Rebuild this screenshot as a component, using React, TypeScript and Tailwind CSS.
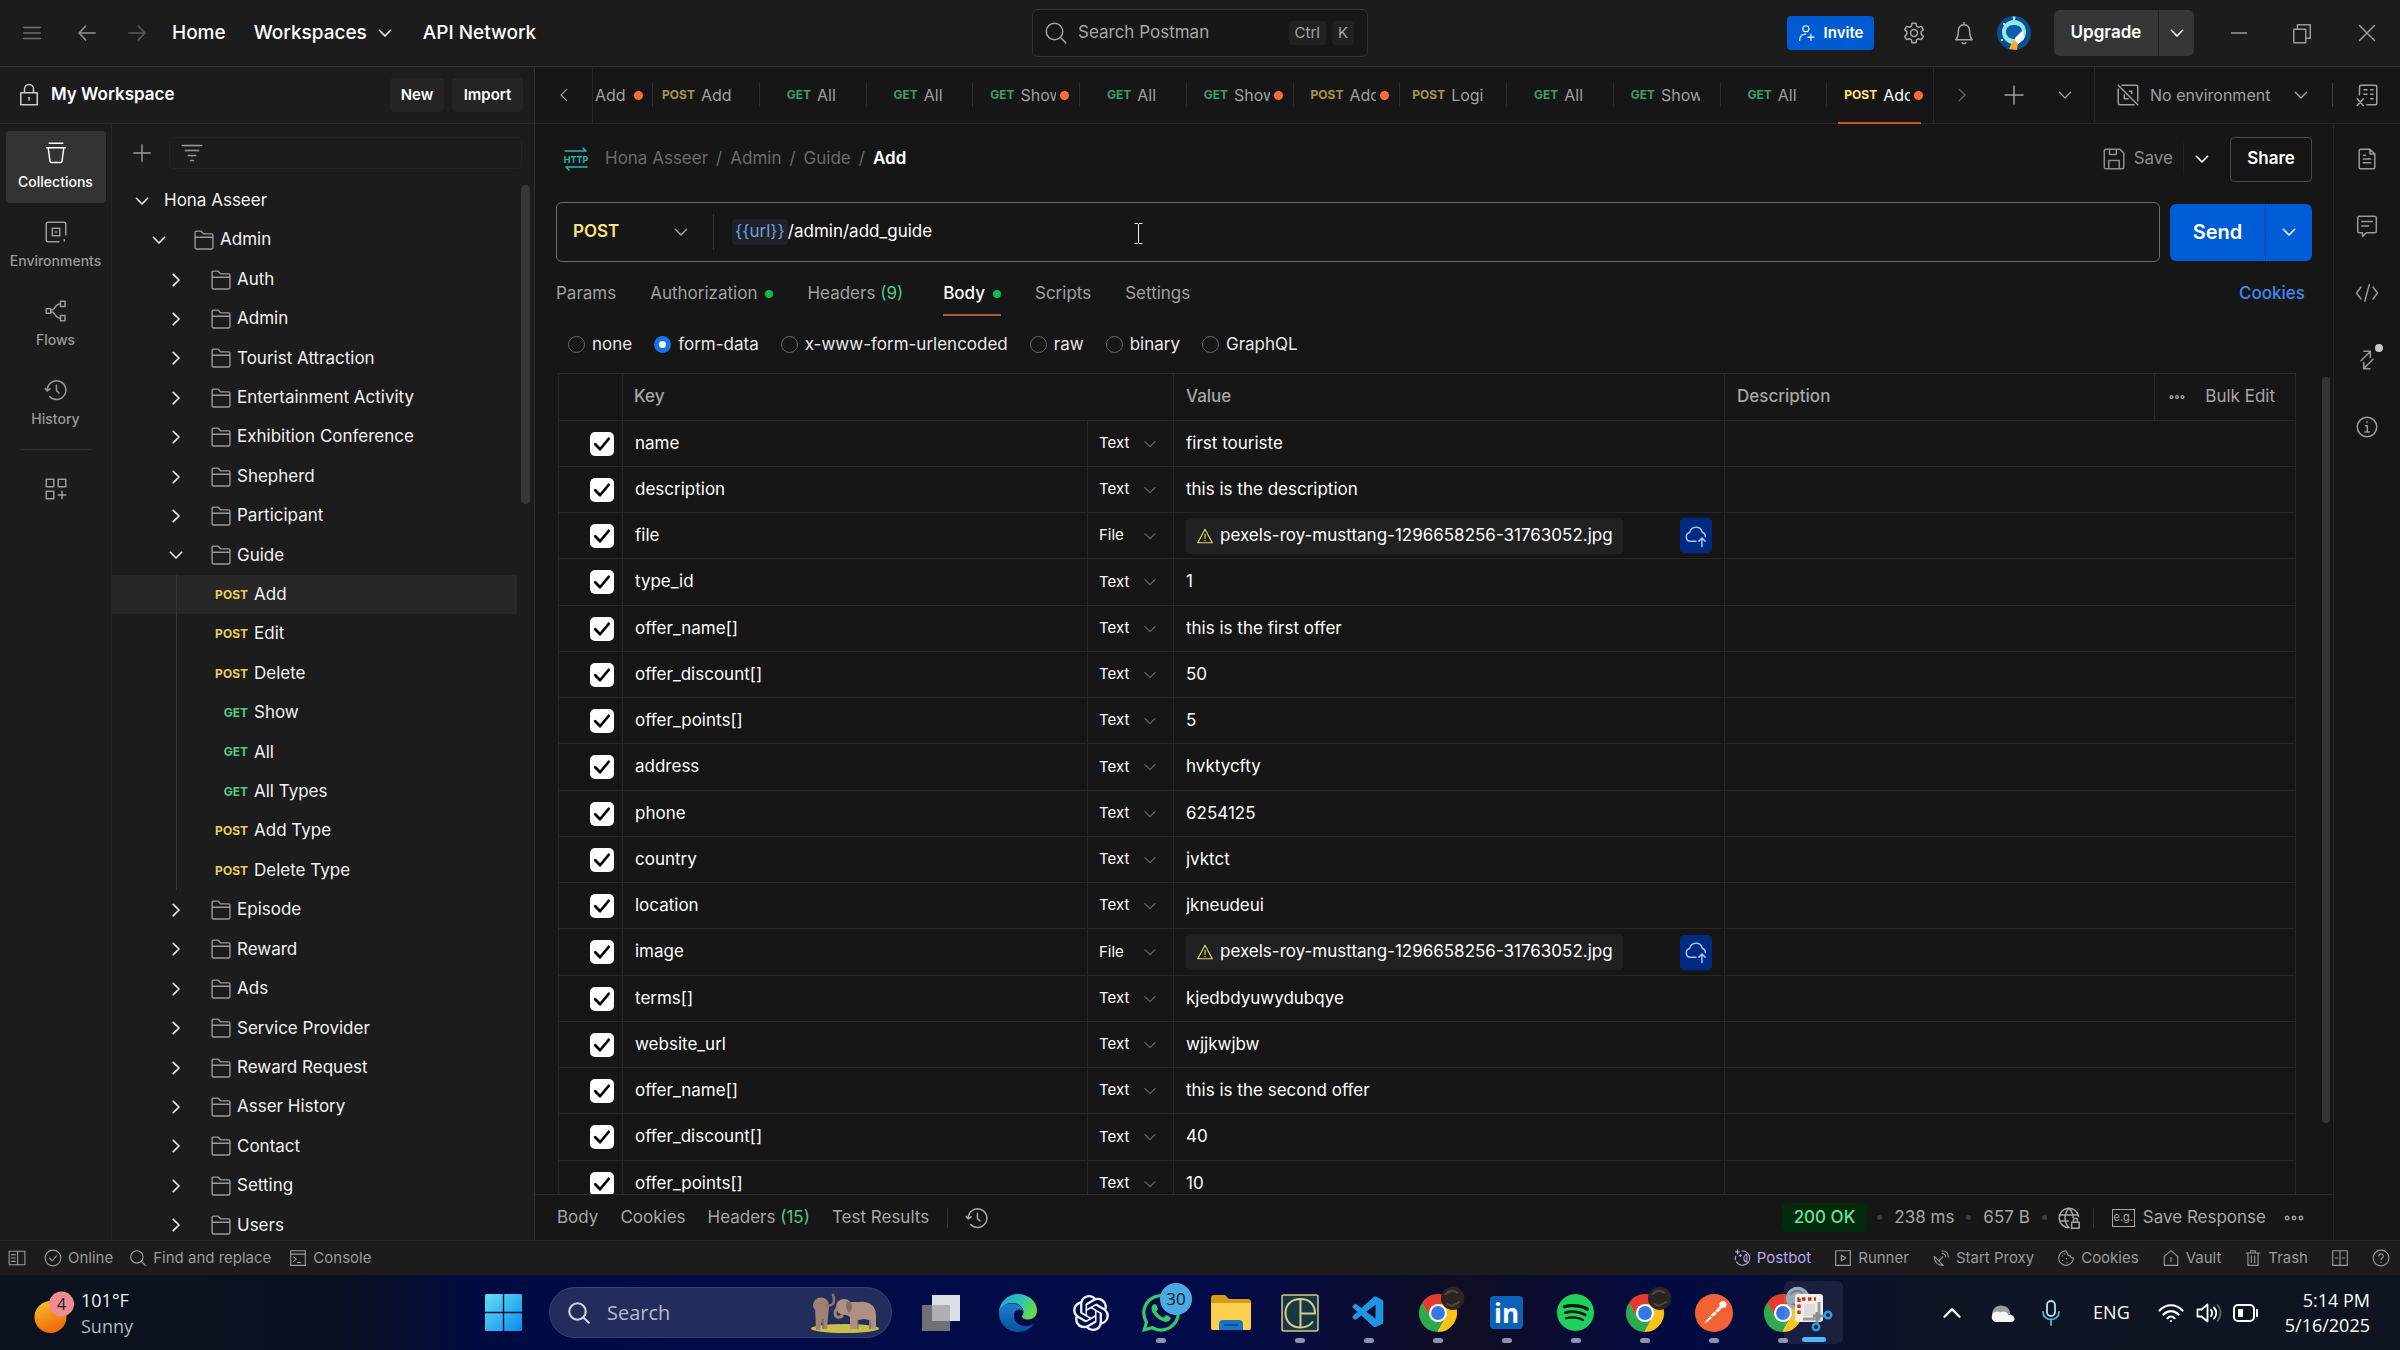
import React from "react";
import { SiOpenai, SiSpotify, SiWhatsapp } from "react-icons/si";
import { VscVscode } from "react-icons/vsc";

type IconProps = { d: string; className?: string; w?: number; children?: React.ReactNode };

function Ic({ d, className = "size-6", w = 1, children }: IconProps) {
  return (
    <svg viewBox="0 0 16 16" fill="none" stroke="currentColor" strokeWidth={w} strokeLinecap="round" strokeLinejoin="round" className={`shrink-0 ${className}`} aria-hidden="true">
      <path d={d} />
      {children}
    </svg>
  );
}

const P = {
  menu: "M2 4h12M2 8h12M2 12h12",
  back: "M14 8H2.5M7 3L2.2 8L7 13",
  fwd: "M2 8h11.5M9 3l4.8 5L9 13",
  down: "M3.5 5.8L8 10.4l4.500-4.600",
  right: "M5.800 3.500L10.400 8l-4.600 4.500",
  left: "M10.200 3.500L5.600 8l4.600 4.500",
  plus: "M8 2v12M2 8h12",
  search: "M7 1.500a5.500 5.500 0 1 1 0 11a5.500 5.500 0 1 1 0-11M11 11l3.500 3.500",
  lock: "M2.500 6.500h11v8h-11zM5 6.500V4a3 3 0 0 1 6 0v2.500M8 9.700v1.600",
  filter: "M1.500 3h13M3.500 6.300h9M5.500 9.700h5M7 13h2",
  collections: "M3.500 1.500h9M1.800 4.500h12.400M2.800 4.500l1.200 9a1 1 0 0 0 1 .9h6a1 1 0 0 0 1-.9l1.200-9",
  env: "M10 14.500H2.500a1 1 0 0 1-1-1v-11a1 1 0 0 1 1-1h11a1 1 0 0 1 1 1V10M5.500 5.500h5v5h-5zM7.500 8h1M13.500 13v1",
  flows: "M1.500 6.500h3v3h-3zM11 1.500h3v3.500h-3zM11 11h3v3.500h-3zM4.500 7.500C8 7.500 7 3.200 11 3.200M4.500 8.500C8 8.500 7 12.800 11 12.800",
  history: "M2.200 8a6.200 6.200 0 1 1 1.600 4.300M.8 7l1.400 1.600L4 7.200M8.300 4.800v3.600l1.700 1.500",
  apps: "M1.500 1.500h5v5h-5zM9.500 1.500h5v5h-5zM1.500 9.500h5v5h-5zM12 9.500v5M9.500 12h5",
  folder: "M1.500 13.500v-11a1 1 0 0 1 1-1h3.200l2 2h5.800a1 1 0 0 1 1 1v9a1 1 0 0 1-1 1h-11a1 1 0 0 1-1-1zM1.500 6h13",
  gear: "M6.700 1.500h2.600l.4 1.900 1.300.8 1.900-.6 1.300 2.200-1.400 1.400v1.600l1.400 1.400-1.300 2.200-1.900-.6-1.300.8-.4 1.900H6.700l-.4-1.900-1.300-.8-1.900.6-1.300-2.200 1.400-1.400V7.200L1.800 5.800l1.300-2.200 1.900.6 1.300-.8zM8 5.700a2.300 2.300 0 1 1 0 4.600a2.300 2.300 0 1 1 0-4.600",
  bell: "M2.500 12.500h11c-1.500-1.500-1.700-3-1.700-5.500C11.800 4 10.300 2.500 8 2.500S4.200 4 4.200 7c0 2.500-.2 4-1.700 5.500M8 1v1.500M6.700 14.500c.6.700 2 .7 2.600 0",
  min: "M3 8h10",
  restore: "M2.500 5.500h8v9h-8zM5 5.500v-3h8.500v9h-3",
  close: "M3 3l10 10M13 3L3 13",
  noEnv: "M4 1.500h9.500a1 1 0 0 1 1 1V12M12 14.500H2.500a1 1 0 0 1-1-1V4M1.500 1.500l13 13M9 5.500h1.500V7M5.500 8v2.500H8",
  envVars: "M3 8V2.500a1 1 0 0 1 1-1h9.500a1 1 0 0 1 1 1v11a1 1 0 0 1-1 1H8M6 4.500h2M10.500 4.500H12M6 7.500h2M10.500 7.500H12M10.500 10.500H12M1.500 10.500l4 4.500M5.500 10.500l-4 4.500",
  save: "M1.500 2.500a1 1 0 0 1 1-1h9.500l2.500 2.500v9.500a1 1 0 0 1-1 1h-11a1 1 0 0 1-1-1zM5 1.500v3.500h4.500V1.500M4.500 14.500V9h7v5.500",
  doc: "M2.800 2.500a1 1 0 0 1 1-1H10l3.200 3.200v8.800a1 1 0 0 1-1 1H3.800a1 1 0 0 1-1-1zM10 1.500v3.200h3.200M5.500 5.500h1.500M5.500 8h5M5.500 10.500h5",
  comment: "M1.800 2.500a1 1 0 0 1 1-1h10.400a1 1 0 0 1 1 1v9a1 1 0 0 1-1 1H7.500L5 15v-2.500H2.800a1 1 0 0 1-1-1zM4.500 5h7M4.500 8h4.500",
  code: "M4 4L1 8l3 4M12 4l3 4-3 4M9.500 2.500l-3 11",
  info: "M8 1.500a6.500 6.500 0 1 1 0 13a6.500 6.500 0 1 1 0-13M7 7.200h1.200v4M6.600 11.300h3M8 4.600v.4",
  swap: "M4 8.500L10 2.500M6 2.200h4.200v4.200M12 7.500l-6 6M10 13.800H5.800V9.600",
  warn: "M8 2L14.500 14h-13zM8 6.500v3.500M8 12v.2",
  cloud: "M8 11.500H4.200a3 3 0 0 1-.4-5.900A4.300 4.300 0 0 1 12.200 5.500a3 3 0 0 1 2 2.800M12 15V9.500M9.900 11.400L12 9.300l2.100 2.100",
  user: "M7 1.500a2.700 2.700 0 1 1 0 5.400a2.700 2.700 0 1 1 0-5.400M1.500 14.500c0-3.500 2-5.500 5.300-5.500M11.500 9v5.500M8.800 11.700h5.500",
  panel: "M1 2h14v12H1zM8.500 2v12M3 5h3.500M3 8h3.500M3 11h3.500",
  online: "M8 1a7 7 0 1 1 0 14a7 7 0 1 1 0-14M5 8l2.300 2.500L11.200 6",
  console: "M1.500 1.500h13v13h-13zM1.500 4.500h13M4 7l2.500 2L4 11M7.500 12h3",
  runner: "M1.500 1.500h13v13h-13zM6.500 5.500v5L10.500 8z",
  postbot: "M8 1.800A6.300 6.300 0 1 1 3.200 11.500M2.500 6.500c-.6 1-.7 2-.5 3M11.500 5c-2.500 1.500-2.500 5 0 6.500M12.300 5v6.500M4 .8v3.400M2.300 2.500h3.400M6.500 5v1.600M5.700 5.800h1.600",
  proxy: "M2 6.500c0 5 3 8 8 8zM6 10.500L9.500 7M9 4c1.800 0 3 1.200 3 3M9 1.500c3.200 0 5.500 2.300 5.500 5.500",
  cookie: "M8 1.500a6.500 6.500 0 1 0 6.500 6.500c-1.500.3-2.500-.8-2.500-2-2 .3-3-1-2.500-2.500C8.500 3.300 8 2.500 8 1.500M5 6v.2M5 10v.2M8.500 8.500v.2M9 12v.2M6.800 4.300v.2",
  vault: "M2 6.500L8 1.500l6 5v8H2zM8 7.500v3.500",
  trash: "M2 3.500h12M6 3.500v-2h4v2M3.500 3.500v11h9v-11M6.500 6v6M9.500 6v6",
  twoPane: "M1.500 1.500h13v13h-13zM8 1.500v13M4 8h2M10 8h2",
  help: "M8 1a7 7 0 1 1 0 14a7 7 0 1 1 0-14M6 6.300a2 2 0 1 1 2.800 1.900c-.5.300-.8.600-.8 1.200M8 11.600v.2",
  globeLock: "M8 14.500A6.500 6.500 0 1 1 14.400 7M8 14.500C4.500 11 4.500 5 8 1.500c1.800 1.800 2.600 4 2.700 6M1.700 6h12.500M1.700 10H7.500M9.800 10.800h5v4h-5zM11 10.800V9.500a1.300 1.300 0 0 1 2.600 0v1.300",
  more: "M2.500 6.600a1.400 1.400 0 1 1 0 2.800a1.400 1.400 0 1 1 0-2.800M8 6.600a1.400 1.400 0 1 1 0 2.800a1.400 1.400 0 1 1 0-2.800M13.500 6.600a1.400 1.400 0 1 1 0 2.800a1.400 1.400 0 1 1 0-2.800",
};

const VLine = ({ className = "h-6 bg-[#333]" }: { className?: string }) => <span className={`w-px shrink-0 ${className}`} />;

/* ---------- Title bar ---------- */
function TitleBar() {
  return (
    <header className="relative flex h-[67px] shrink-0 items-center border-b border-[#303030] bg-[#1c1c1c] text-[19px] font-medium text-white">
      <button aria-label="Menu" className="ml-[21px] text-[#6f6f6f]"><Ic d={P.menu} className="size-[22px]" /></button>
      <button aria-label="Back" className="ml-[33px] text-[#8f8f8f]"><Ic d={P.back} className="size-[22px]" w={1.1} /></button>
      <button aria-label="Forward" className="ml-7 text-[#5a5a5a]"><Ic d={P.fwd} className="size-[22px]" w={1.1} /></button>
      <nav className="ml-6 flex items-center">
        <a href="#home">Home</a>
        <button className="ml-7 flex items-center gap-2 font-medium">Workspaces <Ic d={P.down} className="size-5" w={1.2} /></button>
        <a href="#network" className="ml-7">API Network</a>
      </nav>
      <label className="absolute left-1/2 top-[9px] flex h-[48px] w-[336px] -translate-x-1/2 items-center rounded-md border border-[#333] bg-[#171717] pl-[11px] pr-[13px] text-[17px] font-normal text-[#a6a6a6]">
        <Ic d={P.search} className="size-6" />
        <input aria-label="Search Postman" placeholder="Search Postman" className="ml-2.5 w-0 flex-1 bg-transparent outline-none placeholder:text-[#a6a6a6]" />
        <span className="rounded bg-[#212121] px-1.5 text-[15px] leading-6">Ctrl</span>
        <span className="ml-1.5 rounded bg-[#212121] px-1.5 text-[15px] leading-6">K</span>
      </label>
      <div className="ml-auto flex items-center">
        <button className="flex h-[34px] w-[87px] items-center justify-center gap-2 rounded bg-[#005bd3] text-[15px] font-semibold"><Ic d={P.user} className="size-[18px]" />Invite</button>
        <button aria-label="Settings" className="ml-7 text-[#a6a6a6]"><Ic d={P.gear} className="size-6" /></button>
        <button aria-label="Notifications" className="ml-[26px] text-[#a6a6a6]"><Ic d={P.bell} className="size-6" /></button>
        <button aria-label="Account" className="ml-[21px]">
          <svg viewBox="0 0 34 34" className="size-[34px]">
            <circle cx="17" cy="17" r="17" fill="#0b4f93" />
            <path d="M17 2v5" stroke="#9ff0e8" strokeWidth="2" />
            <circle cx="17" cy="1.800" r="1.500" fill="#9ff0e8" />
            <circle cx="17" cy="16" r="12" fill="#8fe9e4" />
            <path d="M9 15.500c0-4.500 4-6.500 8-6.500s8 2 8 6.500-3.500 7.500-8 7.500-8-3-8-7.500" fill="#0d5fae" />
            <path d="M26 14l-8 8 2 7 7-6z" fill="#fff" />
            <path d="M12 33l4-9 5 3-1 7z" fill="#ffab2e" />
            <circle cx="5" cy="24" r="1" fill="#fff" /><circle cx="7" cy="8" r="1" fill="#fff" />
          </svg>
        </button>
        <div className="ml-[23px] flex h-[46px] items-stretch rounded-md bg-[#363636] text-[17px] font-semibold">
          <button className="w-[104px]">Upgrade</button>
          <button aria-label="Upgrade options" className="flex w-9 items-center justify-center border-l border-[#232323]"><Ic d={P.down} className="size-5" w={1.2} /></button>
        </div>
        <button aria-label="Minimize" className="ml-[33px] text-[#9a9a9a]"><Ic d={P.min} className="size-6" /></button>
        <button aria-label="Restore" className="ml-[39px] text-[#9a9a9a]"><Ic d={P.restore} className="size-6" /></button>
        <button aria-label="Close" className="ml-[41px] mr-[21px] text-[#9a9a9a]"><Ic d={P.close} className="size-6" /></button>
      </div>
    </header>
  );
}

/* ---------- Sidebar ---------- */
const rail = [
  { label: "Collections", d: P.collections, on: true },
  { label: "Environments", d: P.env },
  { label: "Flows", d: P.flows },
  { label: "History", d: P.history },
];

type Node = { t: string; lvl?: 0 | 1; m?: "POST" | "GET"; open?: boolean; sel?: boolean };
const tree: Node[] = [
  { t: "Hona Asseer", lvl: 0, open: true },
  { t: "Admin", lvl: 1, open: true },
  { t: "Auth" }, { t: "Admin" }, { t: "Tourist Attraction" }, { t: "Entertainment Activity" },
  { t: "Exhibition Conference" }, { t: "Shepherd" }, { t: "Participant" }, { t: "Guide", open: true },
  { t: "Add", m: "POST", sel: true }, { t: "Edit", m: "POST" }, { t: "Delete", m: "POST" },
  { t: "Show", m: "GET" }, { t: "All", m: "GET" }, { t: "All Types", m: "GET" },
  { t: "Add Type", m: "POST" }, { t: "Delete Type", m: "POST" },
  { t: "Episode" }, { t: "Reward" }, { t: "Ads" }, { t: "Service Provider" }, { t: "Reward Request" },
  { t: "Asser History" }, { t: "Contact" }, { t: "Setting" }, { t: "Users" },
];

function TreeRow({ n }: { n: Node }) {
  if (n.m)
    return (
      <button className={`mr-[17px] flex items-center text-left ${n.sel ? "bg-[#272727]" : ""}`}>
        <span className="ml-16 w-px self-stretch bg-[#363636]" />
        <span className={`w-[71px] text-right text-[12px] font-bold ${n.m === "POST" ? "text-[#e8cf5e]" : "text-[#54c98a]"}`}>{n.m}</span>
        <span className="ml-1.5">{n.t}</span>
      </button>
    );
  const pad = n.lvl === 0 ? "pl-5" : n.lvl === 1 ? "pl-[37px]" : "pl-[54px]";
  return (
    <button className={`flex items-center text-left ${pad}`}>
      <Ic d={n.open ? P.down : P.right} className="size-5" w={1.3} />
      {n.lvl === 0 ? null : <Ic d={P.folder} className="ml-6 size-[22px] text-[#9a9a9a]" />}
      <span className={n.lvl === 0 ? "ml-3" : "ml-[5px]"}>{n.t}</span>
    </button>
  );
}

function Sidebar() {
  return (
    <aside className="flex w-[535px] shrink-0 flex-col border-r border-[#303030] bg-[#1c1c1c] text-[17px] text-[#f2f2f2]">
      <div className="flex h-[57px] shrink-0 items-center border-b border-[#282828] pl-[17px] pr-[11px] text-white">
        <Ic d={P.lock} className="size-6 text-[#ccc]" />
        <span className="ml-2.5 font-semibold">My Workspace</span>
        <button className="ml-auto h-[34px] w-[54px] rounded bg-[#242424] text-[15px] font-semibold">New</button>
        <button className="ml-2 h-[34px] w-[71px] rounded bg-[#242424] text-[15px] font-semibold">Import</button>
      </div>
      <div className="flex min-h-0 flex-1">
        <nav className="flex w-[112px] shrink-0 flex-col items-center gap-[7px] border-r border-[#262626] pt-[7px] text-[14px] font-medium text-[#9a9a9a]">
          {rail.map((r) => (
            <button key={r.label} className={`flex h-[72px] w-[100px] flex-col items-center gap-1.5 rounded pt-2.5 ${r.on ? "bg-[#333] text-white" : ""}`}>
              <Ic d={r.d} className="size-6" />
              {r.label}
            </button>
          ))}
          <span className="mt-0.5 h-px w-[72px] bg-[#2b2b2b]" />
          <button aria-label="Configure sidebar" className="mt-5"><Ic d={P.apps} className="size-6" /></button>
        </nav>
        <div className="flex min-w-0 flex-1 flex-col">
          <div className="flex h-[57px] shrink-0 items-center pl-[19px] pr-3 text-[#9a9a9a]">
            <button aria-label="Create new"><Ic d={P.plus} className="size-[22px]" /></button>
            <label className="ml-4 flex h-8 flex-1 items-center rounded border border-[#232323] pl-2.5">
              <Ic d={P.filter} className="size-6" />
              <input aria-label="Filter collections" className="ml-2 w-0 flex-1 bg-transparent outline-none" />
            </label>
          </div>
          <div className="relative min-h-0 flex-1 overflow-hidden">
            <div className="grid h-[1064px] auto-rows-fr">
              {tree.map((n, i) => <TreeRow key={i} n={n} />)}
            </div>
            <span className="absolute right-1 top-1 h-[319px] w-[9px] rounded-full bg-[#373737]" />
          </div>
        </div>
      </div>
    </aside>
  );
}

/* ---------- Request tabs ---------- */
type Tab = { m: "POST" | "GET"; t: string; dot?: boolean; pad: string; on?: boolean };
const tabs: Tab[] = [
  { m: "POST", t: "Add", pad: "pl-2.5" },
  { m: "GET", t: "All", pad: "pl-7" },
  { m: "GET", t: "All", pad: "pl-7" },
  { m: "GET", t: "Show", dot: true, pad: "pl-[18px]" },
  { m: "GET", t: "All", pad: "pl-7" },
  { m: "GET", t: "Show", dot: true, pad: "pl-[18px]" },
  { m: "POST", t: "Add", dot: true, pad: "pl-[18px]" },
  { m: "POST", t: "Logi", pad: "pl-[13px]" },
  { m: "GET", t: "All", pad: "pl-7" },
  { m: "GET", t: "Show", pad: "pl-[18px]" },
  { m: "GET", t: "All", pad: "pl-7" },
  { m: "POST", t: "Add", dot: true, pad: "pl-[18px]", on: true },
];
const Dot = () => <span className="size-[9px] shrink-0 rounded-full bg-[#ff6c37]" />;

function TabStrip() {
  return (
    <div className="flex h-[57px] shrink-0 items-stretch border-b border-[#262626] text-[16px] text-[#a0a0a0]">
      <button aria-label="Scroll tabs left" className="flex w-[58px] items-center justify-center border-r border-[#262626]"><Ic d={P.left} className="size-5" /></button>
      <button className="flex w-[59px] items-center gap-2 pl-0.5">Add <Dot /></button>
      <div className="grid min-w-0 flex-1 grid-cols-12">
        {tabs.map((t, i) => (
          <button key={i} className={`relative flex min-w-0 items-center ${t.pad} ${t.dot ? "pr-2.5" : "pr-5"}`}>
            <span className="absolute left-0 top-4 h-6 w-px bg-[#2b2b2b]" />
            <span className={`mr-1.5 text-[12px] font-bold ${t.m === "GET" ? "text-[#439a6c]" : t.on ? "text-[#ffe47e]" : "text-[#a6974e]"}`}>{t.m}</span>
            <span className={`min-w-0 flex-1 overflow-hidden whitespace-nowrap text-left ${t.on ? "text-white" : ""}`}>{t.t}</span>
            {t.dot ? <span className="ml-1 flex"><Dot /></span> : null}
            {t.on ? <span className="absolute -bottom-px left-3 right-3 h-0.5 bg-[#c8532d]" /> : null}
          </button>
        ))}
      </div>
      <div className="flex w-[162px] items-center justify-between border-x border-[#262626] pl-[18px] pr-[19px]">
        <button aria-label="Scroll tabs right" className="text-[#6b6b6b]"><Ic d={P.right} className="size-5" /></button>
        <button aria-label="New tab"><Ic d={P.plus} className="size-6" /></button>
        <button aria-label="Tab list"><Ic d={P.down} className="size-5" /></button>
      </div>
      <button className="flex w-[238px] items-center pl-[21px]">
        <Ic d={P.noEnv} className="size-6" />
        <span className="ml-2.5 flex-1 text-left">No environment</span>
        <Ic d={P.down} className="mr-[21px] size-5" w={1.1} />
        <VLine className="h-6 bg-[#444]" />
      </button>
      <button aria-label="Environment quick look" className="flex w-[67px] items-center justify-center"><Ic d={P.envVars} className="size-6" /></button>
    </div>
  );
}

/* ---------- Request ---------- */
function RequestHead() {
  const crumb = "text-[#6b6b6b]";
  return (
    <div className="flex h-[70px] shrink-0 items-center pr-[21px]">
      <svg viewBox="0 0 24 24" className="ml-2 size-6" fill="none" stroke="#2bb8b0" strokeWidth="1.5" strokeLinecap="round" strokeLinejoin="round" aria-hidden="true">
        <path d="M1 4h21M19 1l3 3M23 20H2M5 23l-3-3" />
        <text x="12" y="16" textAnchor="middle" fontSize="9" fontWeight="700" fontFamily="Inter" fill="#2bb8b0" stroke="none">HTTP</text>
      </svg>
      <nav className="ml-[17px] flex items-center gap-2 text-[17px]">
        <a href="#c" className={crumb}>Hona Asseer</a><span className={crumb}>/</span>
        <a href="#a" className={crumb}>Admin</a><span className={crumb}>/</span>
        <a href="#g" className={crumb}>Guide</a><span className={crumb}>/</span>
        <span className="font-semibold text-white">Add</span>
      </nav>
      <button className="ml-auto flex items-center gap-2 text-[17px] text-[#8c8c8c]"><Ic d={P.save} className="size-6" />Save</button>
      <VLine className="ml-2.5 h-8 bg-[#222]" />
      <button aria-label="Save options" className="ml-2 text-white"><Ic d={P.down} className="size-5" w={1.3} /></button>
      <button className="ml-[18px] h-[45px] w-[82px] rounded border border-[#4a4a4a] text-[17px] font-semibold text-white">Share</button>
    </div>
  );
}

function UrlBar() {
  return (
    <div className="mt-2 flex h-[60px] shrink-0 items-center pr-[21px] text-[17px]">
      <div className="relative flex h-full flex-1 items-center rounded-md border border-[#6b6b6b] text-white">
        <label className="relative flex items-center">
          <select aria-label="Method" className="w-[140px] appearance-none bg-transparent pl-4 font-semibold text-[#ffe47e] outline-none"><option>POST</option></select>
          <Ic d={P.down} className="pointer-events-none absolute right-1.5 size-5 text-[#a6a6a6]" w={1.1} />
        </label>
        <VLine className="ml-4 h-9 bg-[#333]" />
        <span className="ml-[18px] rounded bg-[#1f2227] px-[3px] text-[#6f9fe0]">{"{{url}}"}</span>
        <input aria-label="Request URL" defaultValue="/admin/add_guide" className="min-w-0 flex-1 bg-transparent outline-none" />
        <svg viewBox="0 0 9 21" className="absolute left-[577px] top-5 h-[21px] w-[9px]" stroke="#eee" fill="none" aria-hidden="true"><path d="M.5 .5h3l1 1 1-1h3M4.500 1v19M.5 20.500h3l1-1 1 1h3" /></svg>
      </div>
      <div className="ml-2.5 flex h-[57px] items-stretch rounded-md bg-[#005bd7] text-white">
        <button className="w-[95px] text-[20px] font-semibold">Send</button>
        <button aria-label="Send options" className="flex w-[47px] items-center justify-center border-l border-[#0a47a0]"><Ic d={P.down} className="size-5" w={1.3} /></button>
      </div>
    </div>
  );
}

const G = () => <span className="size-2 rounded-full bg-[#0cbb52]" />;

function BodyTabs() {
  return (
    <div className="flex h-[54px] shrink-0 items-stretch pr-7 pt-2.5 text-[17px] text-[#a0a0a0]">
      <button>Params</button>
      <button className="ml-[34px] flex items-center gap-2">Authorization <G /></button>
      <button className="ml-[34px]">Headers <span className="text-[#55c58b]">(9)</span></button>
      <button className="ml-10 flex items-center gap-2 border-b-2 border-[#a85a40] pt-0.5 font-medium text-white">Body <G /></button>
      <button className="ml-[34px]">Scripts</button>
      <button className="ml-[34px]">Settings</button>
      <a href="#cookies" className="ml-auto self-center font-medium text-[#3f88f5]">Cookies</a>
    </div>
  );
}

const modes = ["none", "form-data", "x-www-form-urlencoded", "raw", "binary", "GraphQL"];
function Modes() {
  return (
    <div role="radiogroup" aria-label="Body type" className="flex h-[57px] shrink-0 items-center gap-[22px] pl-3 text-[17px] text-[#e8e8e8]">
      {modes.map((m) => (
        <label key={m} className="flex items-center gap-[7px]">
          <input type="radio" name="body-mode" defaultChecked={m === "form-data"} className="size-[17px] appearance-none rounded-full border border-[#666] checked:border-[5px] checked:border-[#1574e8] checked:bg-white" />
          {m}
        </label>
      ))}
    </div>
  );
}

const pic = "pexels-roy-musttang-1296658256-31763052.jpg";
const rows: [string, string, boolean?][] = [
  ["name", "first touriste"], ["description", "this is the description"], ["file", pic, true], ["type_id", "1"],
  ["offer_name[]", "this is the first offer"], ["offer_discount[]", "50"], ["offer_points[]", "5"], ["address", "hvktycfty"],
  ["phone", "6254125"], ["country", "jvktct"], ["location", "jkneudeui"], ["image", pic, true], ["terms[]", "kjedbdyuwydubqye"],
  ["website_url", "wjjkwjbw"], ["offer_name[]", "this is the second offer"], ["offer_discount[]", "40"], ["offer_points[]", "10"],
];
const cell = "border border-[#272727] p-0";

function FormTable() {
  return (
    <div className="relative min-h-0 flex-1 overflow-hidden pl-0.5 pr-[37px]">
      <table className="w-full table-fixed border-collapse text-[17px] text-white">
        <colgroup>
          <col className="w-16" /><col className="w-[465px]" /><col className="w-[86px]" /><col /><col className="w-[430px]" /><col className="w-[141px]" />
        </colgroup>
        <thead>
          <tr className="h-[47px] text-left text-[#a6a6a6]">
            <th className={cell} aria-label="Enabled" />
            <th className={`${cell} pl-[11px] font-medium`} colSpan={2}>Key</th>
            <th className={`${cell} pl-3 font-medium`}>Value</th>
            <th className={`${cell} pl-3 font-medium`}>Description</th>
            <th className={cell}>
              <div className="flex items-center justify-between pl-3.5 pr-5">
                <button aria-label="Columns"><Ic d={P.more} className="size-4" w={1.3} /></button>
                <button className="font-normal">Bulk Edit</button>
              </div>
            </th>
          </tr>
        </thead>
        <tbody>
          {rows.map(([k, v, file], i) => (
            <tr key={i} className="h-[46px] nth-[4n]:h-[47px]">
              <td className={cell}>
                <label className="relative ml-[31px] block size-6">
                  <input type="checkbox" defaultChecked aria-label={`Include ${k}`} className="block size-6 appearance-none rounded-[5px] bg-white" />
                  <Ic d="M3.500 8.200L6.700 11.500L12.500 4.500" className="pointer-events-none absolute inset-0 size-6 text-black" w={1.8} />
                </label>
              </td>
              <td className={`${cell} pl-3`}><input aria-label="Key" defaultValue={k} className="block w-full bg-transparent outline-none" /></td>
              <td className={`${cell} pl-[11px]`}>
                <label className="relative flex items-center">
                  <select aria-label="Type" defaultValue={file ? "File" : "Text"} className="w-[70px] appearance-none bg-transparent text-[15px] outline-none"><option>Text</option><option>File</option></select>
                  <Ic d={P.down} className="pointer-events-none absolute right-3.5 size-[18px] text-[#6b6b6b]" />
                </label>
              </td>
              <td className={`${cell} pl-3`}>
                {file ? (
                  <div className="flex items-center justify-between pr-3">
                    <span className="flex h-9 items-center gap-1.5 rounded bg-[#212121] px-2.5"><Ic d={P.warn} className="size-[18px] text-[#dcd060]" w={1.1} />{v}</span>
                    <button aria-label="Upload to cloud" className="flex h-[35px] w-8 items-center justify-center rounded bg-[#012a80] text-[#9cc8ff]"><Ic d={P.cloud} className="size-6" /></button>
                  </div>
                ) : (
                  <input aria-label="Value" defaultValue={v} className="block w-full bg-transparent outline-none" />
                )}
              </td>
              <td className={cell} colSpan={2}><input aria-label="Description" className="block w-full bg-transparent px-3 outline-none" /></td>
            </tr>
          ))}
        </tbody>
      </table>
      <span className="absolute right-[3px] top-1 h-[746px] w-2 rounded-full bg-[#353535]" />
    </div>
  );
}

function ResponseBar() {
  const sep = <span className="size-[5px] rounded-full bg-[#3f3f3f]" />;
  return (
    <div className="flex h-[46px] shrink-0 items-center border-t border-[#2b2b2b] pl-[22px] pr-[29px] text-[17px] text-[#a6a6a6]">
      <button>Body</button>
      <button className="ml-[22px]">Cookies</button>
      <button className="ml-[22px]">Headers <span className="text-[#55c58b]">(15)</span></button>
      <button className="ml-[22px]">Test Results</button>
      <VLine className="ml-[18px] h-5 bg-[#333]" />
      <button aria-label="Response history" className="ml-[17px]"><Ic d={P.history} className="size-6" /></button>
      <span className="ml-auto rounded bg-[#03290c] px-3 font-medium leading-[29px] text-[#69e09c]">200 OK</span>
      <div className="ml-2.5 flex items-center gap-3">
        {sep}<span>238 ms</span>{sep}<span>657 B</span>{sep}
      </div>
      <Ic d={P.globeLock} className="ml-2.5 size-6" />
      <VLine className="ml-3 h-5 bg-[#333]" />
      <button className="ml-[18px] flex items-center gap-2">
        <span className="flex h-[18px] w-[23px] items-center justify-center border border-[#a6a6a6] text-[11px] leading-none">e.g.</span>
        Save Response
      </button>
      <button aria-label="More" className="ml-[18px]"><Ic d={P.more} className="size-5" w={1.1} /></button>
    </div>
  );
}

const rightRail = [P.doc, P.comment, P.code, P.swap, P.info];
const rightNames = ["Documentation", "Comments", "Code", "Related requests", "Info"];

function Item({ d, t, className = "" }: { d: string; t: string; className?: string }) {
  return <button className={`flex items-center gap-1.5 ${className}`}><Ic d={d} className="size-[18px]" />{t}</button>;
}

function StatusBar() {
  return (
    <footer className="flex h-[35px] shrink-0 items-center border-t border-[#282828] bg-[#1c1c1c] pl-2 pr-2.5 text-[15px] text-[#9a9a9a]">
      <button aria-label="Toggle sidebar"><Ic d={P.panel} className="size-[18px]" /></button>
      <Item d={P.online} t="Online" className="ml-[18px]" />
      <Item d={P.search} t="Find and replace" className="ml-4" />
      <Item d={P.console} t="Console" className="ml-[18px]" />
      <div className="ml-auto flex items-center gap-[23px]">
        <Item d={P.postbot} t="Postbot" className="text-[#b9a6ef]" />
        <Item d={P.runner} t="Runner" />
        <Item d={P.proxy} t="Start Proxy" />
        <Item d={P.cookie} t="Cookies" />
        <Item d={P.vault} t="Vault" />
        <Item d={P.trash} t="Trash" />
        <button aria-label="Two pane view"><Ic d={P.twoPane} className="size-[18px]" /></button>
        <button aria-label="Help"><Ic d={P.help} className="size-[18px]" /></button>
      </div>
    </footer>
  );
}

/* ---------- Taskbar ---------- */
function Chrome({ badge }: { badge: string }) {
  const arc = "M0 -10L19.6 -10A22 22 0 0 0 -18.460 -11.970L-8.660 5A10 10 0 0 1 0 -10Z";
  return (
    <svg viewBox="-22 -22 44 44" className="size-[38px] overflow-visible">
      <circle r="20" fill="#fbc116" />
      <path d={arc} fill="#e33b2e" />
      <path d={arc} fill="#fbc116" transform="rotate(120)" />
      <path d={arc} fill="#2da94f" transform="rotate(240)" />
      <circle r="10.500" fill="#fff" /><circle r="8" fill="#3478e5" />
      <circle cx="17" cy="-17" r="13.500" fill={badge} />
      <path d="M8 -21q7 -8 15 -2M10 -11l6 3 9-5" stroke="#6b5a50" strokeWidth="2.500" fill="none" opacity=".6" />
    </svg>
  );
}

function Slot({ label, w = "w-[69px]", run, children }: { label: string; w?: string; run?: boolean; children: React.ReactNode }) {
  return (
    <button aria-label={label} className={`relative flex h-full shrink-0 items-center justify-center ${w}`}>
      {children}
      {run ? <span className="absolute bottom-[7px] h-[5px] w-[10px] rounded-full bg-[#8d92b0]" /> : null}
    </button>
  );
}

function Elephants() {
  return (
    <svg viewBox="0 0 68 40" className="h-10 w-[68px]" aria-hidden="true">
      <ellipse cx="34" cy="35.500" rx="34" ry="4.500" fill="#c9bd4c" />
      <g fill="#9d8275">
        <ellipse cx="10" cy="12" rx="8" ry="7.500" /><path d="M4 14h14l-1 10-1 12h-4l-1-8-2 9H5z" />
        <path d="M15 12c6 2 10-2 7-10" fill="none" stroke="#8d7366" strokeWidth="2.500" strokeLinecap="round" />
      </g>
      <g fill="#ad9184">
        <path d="M34 12c4-4 10-3 15-3 9-1 16 4 16 13v14h-7v-9l-5-1-6 1-1 9h-7V24l-5-3z" /><circle cx="33" cy="14" r="8" />
        <path d="M26 15c-4 6-1 12 5 8" fill="none" stroke="#a08577" strokeWidth="3" strokeLinecap="round" />
      </g>
      <path d="M36 8c6 1 7 8 2 12-3-4-4-8-2-12" fill="#856b5e" />
      <path d="M47 27v9M59 27v9M12 26v10" stroke="#75604f" strokeWidth="1" />
    </svg>
  );
}

function Taskbar() {
  return (
    <div className="flex h-[75px] shrink-0 items-center bg-[linear-gradient(90deg,#0c121d_0%,#0a1020_14%,#010b42_20%,#010b4a_50%,#080b34_56%,#100e24_61%,#020a42_70%,#0d1424_80%,#0e1420_100%)] text-[#f0f0f0]" style={{ fontFamily: '"Open Sans", "Noto Sans", sans-serif' }}>
      <button className="ml-[34px] flex w-[435px] items-center text-left text-[18px] leading-[26px]">
        <svg viewBox="0 0 42 46" className="h-[46px] w-[42px]" aria-hidden="true">
          <defs><linearGradient id="sun" x1="0" y1="0" x2=".4" y2="1"><stop offset="0" stopColor="#f8c22c" /><stop offset="1" stopColor="#ef6c0a" /></linearGradient></defs>
          <circle cx="16.500" cy="27" r="16" fill="url(#sun)" />
          <circle cx="27.500" cy="14" r="12.500" fill="#ee8b93" />
          <text x="27.500" y="20" textAnchor="middle" fontSize="16" fill="#1b1b1b">4</text>
        </svg>
        <span className="ml-[5px] flex flex-col"><span>101°F</span><span className="text-[#b3b7bf]">Sunny</span></span>
      </button>
      <Slot label="Start">
        <svg viewBox="0 0 37 37" className="size-[37px]">
          <defs><linearGradient id="win" x1="0" y1="0" x2="1" y2="1"><stop offset="0" stopColor="#63e0ee" /><stop offset="1" stopColor="#0a8cf0" /></linearGradient></defs>
          <path d="M0 1.500Q0 0 1.500 0H17.800V17.800H0zM19.200 0H35.500Q37 0 37 1.500V17.800H19.200zM0 19.200H17.800V37H1.500Q0 37 0 35.500zM19.200 19.200H37V35.500Q37 37 35.500 37H19.200z" fill="url(#win)" />
        </svg>
      </Slot>
      <label className="ml-[11px] flex h-[51px] w-[343px] items-center rounded-full border border-[#35407a] bg-[#232d5b] pl-[17px] pr-3 text-[20px]">
        <Ic d={P.search} className="size-6 text-[#cfd3e2]" w={1.4} />
        <input aria-label="Search" placeholder="Search" className="ml-4 w-0 flex-1 bg-transparent outline-none placeholder:text-[#b4bbd4]" />
        <Elephants />
      </label>
      <div className="ml-2.5 flex h-full items-center">
        <Slot label="Task view" w="w-[78px]">
          <svg viewBox="0 0 38 36" className="h-9 w-[38px]"><path d="M0 10h28v26H0z" fill="#6f7176" /><path d="M10 0h28v26H10z" fill="#dcdee2" /><path d="M10 10h18v16H10z" fill="#aeb0b5" /></svg>
        </Slot>
        <Slot label="Edge" w="w-[76px]">
          <svg viewBox="0 0 38 38" className="size-[38px]">
            <defs>
              <linearGradient id="e1" x1="0" y1="0" x2="1" y2=".4"><stop offset="0" stopColor="#1c9fe0" /><stop offset=".6" stopColor="#2fc4b2" /><stop offset="1" stopColor="#65d84c" /></linearGradient>
              <linearGradient id="e2" x1="0" y1="0" x2="0" y2="1"><stop offset="0" stopColor="#1b7fd0" /><stop offset="1" stopColor="#0b4f9c" /></linearGradient>
            </defs>
            <path d="M0 19C0 8 9 0 19 0c11 0 19 8 19 16.500 0 6-4.500 9-9 9-4 0-6-1.500-6-3 0-1 1.500-1.500 1.500-4.500C24.500 13 20 9 13 9 6 9 1 14 0 19z" fill="url(#e1)" />
            <path d="M0 19C1 13 6 9.500 12.500 9.500 20 9.500 24 14 24 17c-2-1.500-4-2-6-1-5 3-4 12 3 15 6 2.500 11 1 14-2C31.500 35 26 38 19 38 8 38 0 29 0 19z" fill="url(#e2)" />
          </svg>
        </Slot>
        <Slot label="ChatGPT" w="w-[70px]"><SiOpenai className="size-9 text-[#eef0f5]" /></Slot>
        <Slot label="WhatsApp" w="w-[70px]" run>
          <SiWhatsapp className="size-[38px] text-[#2fce66]" />
          <span className="absolute right-1 top-2 flex size-8 items-center justify-center rounded-full bg-[#4aabe0] text-[17px] text-[#0b1a2b]">30</span>
        </Slot>
        <Slot label="File Explorer">
          <svg viewBox="0 0 40 36" className="h-9 w-10"><path d="M0 3q0-3 3-3h11l4 4h19q3 0 3 3v8H0z" fill="#d99a17" /><path d="M0 8h40v25q0 2-2 2H2q-2 0-2-2z" fill="#fbd04d" /><path d="M8 35v-6q0-4 4-4h16q4 0 4 4v6z" fill="#1874c9" /><path d="M13 30h14" stroke="#0b4e96" strokeWidth="2" /></svg>
        </Slot>
        <Slot label="Editor" run>
          <svg viewBox="0 0 38 38" className="size-[38px]" fill="none" stroke="#d8cc84" strokeWidth="2" strokeLinecap="round">
            <rect x="1" y="1" width="36" height="36" rx="2" fill="#173744" strokeWidth="1.500" />
            <path d="M19.500 5v28.500M19.500 5C10 5 4.500 11 4.500 19s5.500 14.500 15 14.500M19.500 5C28 5 34 10 34 19.500H19.500M19.500 33.500c5 0 9-1.500 12-5.500" />
          </svg>
        </Slot>
        <Slot label="Visual Studio Code" run><VscVscode className="size-[38px] text-[#2196e0]" /></Slot>
        <Slot label="Chrome" run><Chrome badge="#2a2422" /></Slot>
        <Slot label="LinkedIn" run><span className="flex size-[33px] items-end justify-center rounded-sm bg-[#0a62b9] text-[26px] font-bold leading-8 text-white">in</span></Slot>
        <Slot label="Spotify" run><span className="relative flex rounded-full bg-[#0b1a10]"><SiSpotify className="size-[37px] text-[#1ed05d]" /></span></Slot>
        <Slot label="Chrome, second profile" run><Chrome badge="#2a2422" /></Slot>
        <Slot label="Postman" run>
          <svg viewBox="0 0 38 38" className="size-[38px]"><circle cx="19" cy="19" r="19" fill="#f26334" /><path d="M9 29l8-9 8-8 2 2-8 8-7 6z" fill="#fff" /><circle cx="28" cy="10.500" r="3.500" fill="#fff" /><path d="M14 22l5 1M19 17l4 2" stroke="#f26334" strokeWidth="1" /></svg>
        </Slot>
        <Slot label="Chrome, third profile" run><Chrome badge="#8fa6b8" /></Slot>
        <button aria-label="Snipping Tool" className="relative -ml-[33px] flex h-[63px] w-[59px] items-center justify-center rounded-md bg-[#ffffff12]">
          <svg viewBox="0 0 38 38" className="size-[38px]" fill="none">
            <rect x="0" y="0" width="28" height="28" rx="3" fill="#f1eeec" />
            <path d="M4 20V5h17" stroke="#c8341c" strokeWidth="3.500" strokeDasharray="3.500 2.500" />
            <path d="M9 10h11v12H9z" fill="#dcdcde" /><path d="M24 8v17H8" stroke="#9b9b9f" strokeWidth="3" />
            <path d="M22 18v13M18 22h12" stroke="#8b8b90" strokeWidth="3" />
            <circle cx="21" cy="33" r="3.200" stroke="#2f9be6" strokeWidth="2.500" /><circle cx="33" cy="21" r="3.200" stroke="#2f9be6" strokeWidth="2.500" />
          </svg>
          <span className="absolute bottom-0.5 h-[5px] w-6 rounded-full bg-[#4cb8f5]" />
        </button>
      </div>
      <div className="ml-auto flex items-center pr-[30px] text-white">
        <button aria-label="Hidden icons"><Ic d="M3 10.500L8 5.500l5 5" className="size-6" w={1.5} /></button>
        <svg viewBox="0 0 26 20" className="ml-[25px] h-5 w-[26px]"><path d="M3 12C3 5 9 1 15 3c4 1 6 4 6 8z" fill="#9a9da3" /><path d="M6 19a5.500 5.500 0 0 1 0-10c2-1 4-.5 5 .5 3-2 7-1 8 2 4-.5 6.500 2 6.500 4.500S23 19 21 19z" fill="#f5f5f7" /></svg>
        <svg viewBox="0 0 18 26" className="ml-[27px] h-[26px] w-[18px]" fill="none" strokeWidth="1.800" strokeLinecap="round"><rect x="5" y="1" width="8" height="15" rx="4" stroke="#b8e4ee" /><path d="M1 12c0 10 16 10 16 0M9 20v5" stroke="#58b6cc" /></svg>
        <span className="ml-[33px] text-[18px]">ENG</span>
        <svg viewBox="0 0 26 20" className="ml-7 h-5 w-[26px]" fill="none" stroke="#fff" strokeWidth="2.200" strokeLinecap="round"><path d="M1.500 7.500c6.500-7 16.500-7 23 0M5.500 11.500c4.500-4.500 10.500-4.500 15 0M9.500 15.200c2-2 5-2 7 0" /><circle cx="13" cy="18" r="1" fill="#fff" stroke="none" /></svg>
        <svg viewBox="0 0 26 22" className="ml-3 h-[22px] w-[26px]" fill="none" stroke="#fff" strokeWidth="1.800" strokeLinecap="round" strokeLinejoin="round"><path d="M1.500 7.500v7h4l6 5V2.500l-6 5zM15 8c1.500 1.500 1.500 4.500 0 6M18 5.500c3 3 3 8 0 11" /><path d="M21.500 3c4 4.500 4 11.500 0 16" stroke="#5d6069" /></svg>
        <svg viewBox="0 0 26 18" className="ml-[11px] h-[18px] w-[26px]" fill="none" stroke="#fff" strokeWidth="2"><rect x="1" y="1" width="20" height="16" rx="4" /><path d="M5 5h5v8H5z" fill="#fff" stroke="none" /><path d="M24 6v6" strokeLinecap="round" /></svg>
        <button className="ml-[26px] flex flex-col text-right text-[18px] leading-[25px]"><span>5:14 PM</span><span>5/16/2025</span></button>
      </div>
    </div>
  );
}

export default function App() {
  return (
    <div className="flex h-screen flex-col overflow-hidden bg-[#161616]" style={{ fontFamily: "Inter, sans-serif" }}>
      <TitleBar />
      <div className="flex min-h-0 flex-1">
        <Sidebar />
        <div className="flex min-w-0 flex-1 flex-col">
          <TabStrip />
          <div className="flex min-h-0 flex-1">
            <main className="flex min-w-0 flex-1 flex-col">
              <div className="flex min-h-0 flex-1 flex-col pl-[21px]">
                <RequestHead />
                <UrlBar />
                <BodyTabs />
                <Modes />
                <FormTable />
              </div>
              <ResponseBar />
            </main>
            <aside className="flex w-[67px] shrink-0 flex-col items-center gap-[43px] border-l border-[#262626] pt-[23px] text-[#9a9a9a]">
              {rightRail.map((d, i) => (
                <button key={i} aria-label={rightNames[i]} className="relative">
                  <Ic d={d} className="size-6" />
                  {i === 3 ? <span className="absolute -right-1 -top-1 size-2 rounded-full bg-[#c8c8c8]" /> : null}
                </button>
              ))}
            </aside>
          </div>
        </div>
      </div>
      <StatusBar />
      <Taskbar />
    </div>
  );
}
